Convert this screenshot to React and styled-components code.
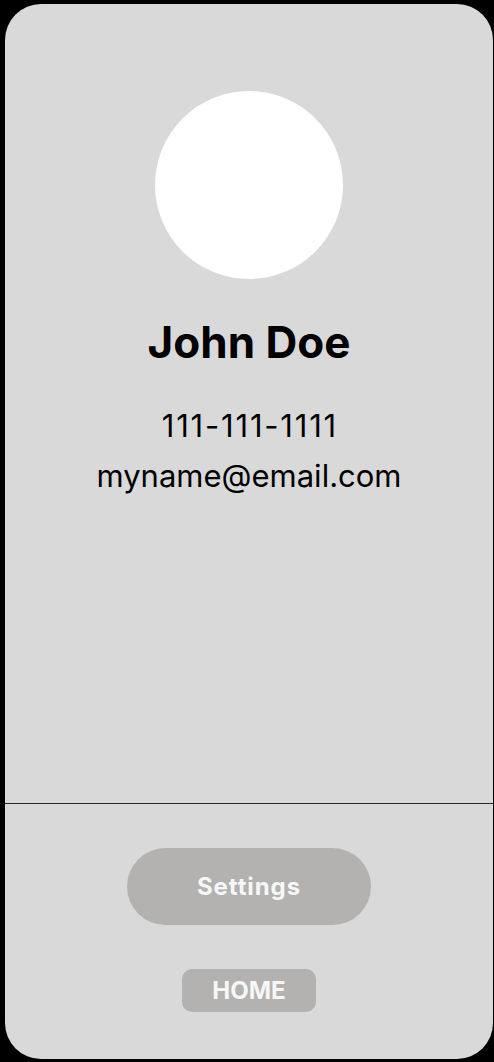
import React from 'react';
import styled, { createGlobalStyle } from 'styled-components';

const GlobalStyle = createGlobalStyle`
  html, body {
    margin: 0;
    padding: 0;
    background: #000000;
  }
  * {
    box-sizing: border-box;
  }
`;

const App = () => {
  return (
    <>
      <GlobalStyle />
      <StPage>
        <StCard>
          <StProfile>
            <StAvatar />
            <StName>John Doe</StName>
            <StContact>
              <StPhone>111-111-1111</StPhone>
              <div>myname@email.com</div>
            </StContact>
          </StProfile>

          <StFooter>
            <StPillButton>Settings</StPillButton>
            <StHomeButton>HOME</StHomeButton>
          </StFooter>
        </StCard>
      </StPage>
    </>
  );
}
export default App;

const StPage = styled.div`
  width: 494px;
  height: 1062px;
  padding: 4px 1px 3px 5px;
  background: #000000;
  font-family: Inter, "Noto Sans", sans-serif;
`;

const StCard = styled.div`
  display: flex;
  flex-direction: column;
  width: 100%;
  height: 100%;
  background-color: #d9d9d9;
  border-radius: 36px;
  overflow: hidden;
`;

const StProfile = styled.div`
  display: flex;
  flex-direction: column;
  align-items: center;
  height: 800px;
  padding-top: 87px;
  border-bottom: 1px solid #262626;
`;

const StAvatar = styled.div`
  width: 188px;
  height: 188px;
  border-radius: 50%;
  background-color: #ffffff;
`;

const StName = styled.div`
  margin-top: 37px;
  font-size: 44px;
  font-weight: 700;
  line-height: 1.2;
  color: #000000;
`;

const StContact = styled.div`
  margin-top: 32px;
  display: flex;
  flex-direction: column;
  align-items: center;
  font-size: 31px;
  font-weight: 400;
  line-height: 50px;
  color: #000000;
`;

const StPhone = styled.div`
  letter-spacing: 1.8px;
  margin-right: -1.8px;
`;

const StFooter = styled.div`
  flex: 1;
  display: flex;
  flex-direction: column;
  align-items: center;
  padding-top: 44px;
`;

const StPillButton = styled.button`
  width: 244px;
  height: 77px;
  border: 0;
  border-radius: 39px;
  background-color: #b3b2b1;
  color: #f7f7f7;
  font-family: inherit;
  font-size: 24px;
  font-weight: 700;
  letter-spacing: 0.9px;
`;

const StHomeButton = styled.button`
  margin-top: 44px;
  width: 134px;
  height: 43px;
  border: 0;
  border-radius: 10px;
  background-color: #b3b2b1;
  color: #f7f7f7;
  font-family: inherit;
  font-size: 24px;
  font-weight: 700;
`;
